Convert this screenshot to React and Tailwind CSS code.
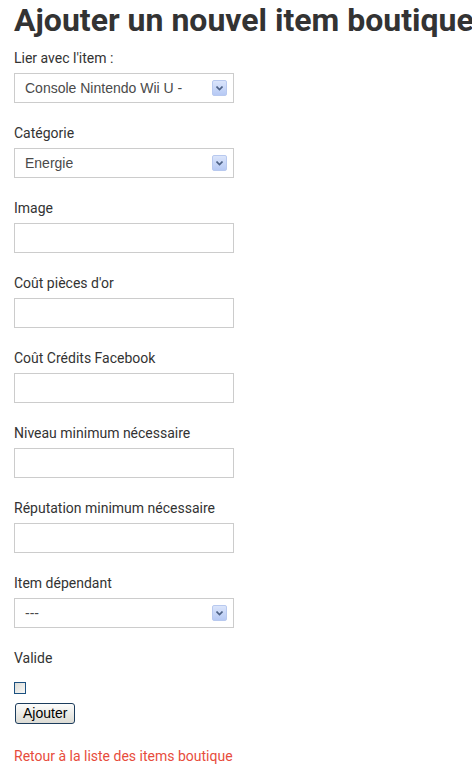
import React from 'react';

const FIELDS = [
  { label: "Lier avec l'item :", type: 'select', value: 'Console Nintendo Wii U -' },
  { label: 'Catégorie', type: 'select', value: 'Energie' },
  { label: 'Image', type: 'text' },
  { label: "Coût pièces d'or", type: 'text' },
  { label: 'Coût Crédits Facebook', type: 'text' },
  { label: 'Niveau minimum nécessaire', type: 'text' },
  { label: 'Réputation minimum nécessaire', type: 'text' },
  { label: 'Item dépendant', type: 'select', value: '---' },
];

function SelectBox({ value }) {
  return (
    <div className="mt-[4px] flex h-[30px] w-[220px] items-center justify-between border border-[#cccccc] bg-white pl-[10px] pr-[6px]">
      <span className="font-['Liberation_Sans',Arial,sans-serif] text-[14px] text-[#4a4a4a]">{value}</span>
      <span className="flex h-[16px] w-[15px] items-center justify-center rounded-[2px] border border-[#b8c9ef] bg-gradient-to-b from-[#dbe5fb] to-[#b6c9f4]">
        <svg width="7" height="5" viewBox="0 0 7 5">
          <path d="M0.5 0.5 L3.5 3.5 L6.5 0.5" fill="none" stroke="#4d6185" strokeWidth="1.6" />
        </svg>
      </span>
    </div>
  );
}

export default function App() {
  return (
    <div className="w-[472px] overflow-hidden bg-white px-[14px] font-['Roboto',sans-serif] text-[#333333]">
      <h1 className="whitespace-nowrap pt-[1px] text-[32px] font-bold leading-[38px] text-[#333333]">
        Ajouter un nouvel item boutique
      </h1>

      <div className="mt-[9px]">
        {FIELDS.map((f, i) => (
          <div key={i} className="mb-[20px]">
            <div className="text-[14px] leading-[21px]">{f.label}</div>
            {f.type === 'select' ? (
              <SelectBox value={f.value} />
            ) : (
              <div className="mt-[4px] h-[30px] w-[220px] border border-[#cccccc] bg-white" />
            )}
          </div>
        ))}

        <div className="text-[14px] leading-[21px]">Valide</div>
        <div className="mt-[13px] h-[12px] w-[12px] border border-[#1c5180] bg-gradient-to-br from-[#dcdcd7] to-[#f8f8f6]" />
        <button className="mt-[9px] ml-[1px] block h-[21px] rounded-[3px] border border-[#1c3c5c] bg-gradient-to-b from-[#fdfdfc] to-[#dcdbd4] px-[7px] font-['Liberation_Sans',Arial,sans-serif] text-[14px] leading-[17px] text-black">
          Ajouter
        </button>
        <div className="mt-[22px] text-[14px] leading-[21px] text-[#e74c3c]">Retour à la liste des items boutique</div>
      </div>
    </div>
  );
}
